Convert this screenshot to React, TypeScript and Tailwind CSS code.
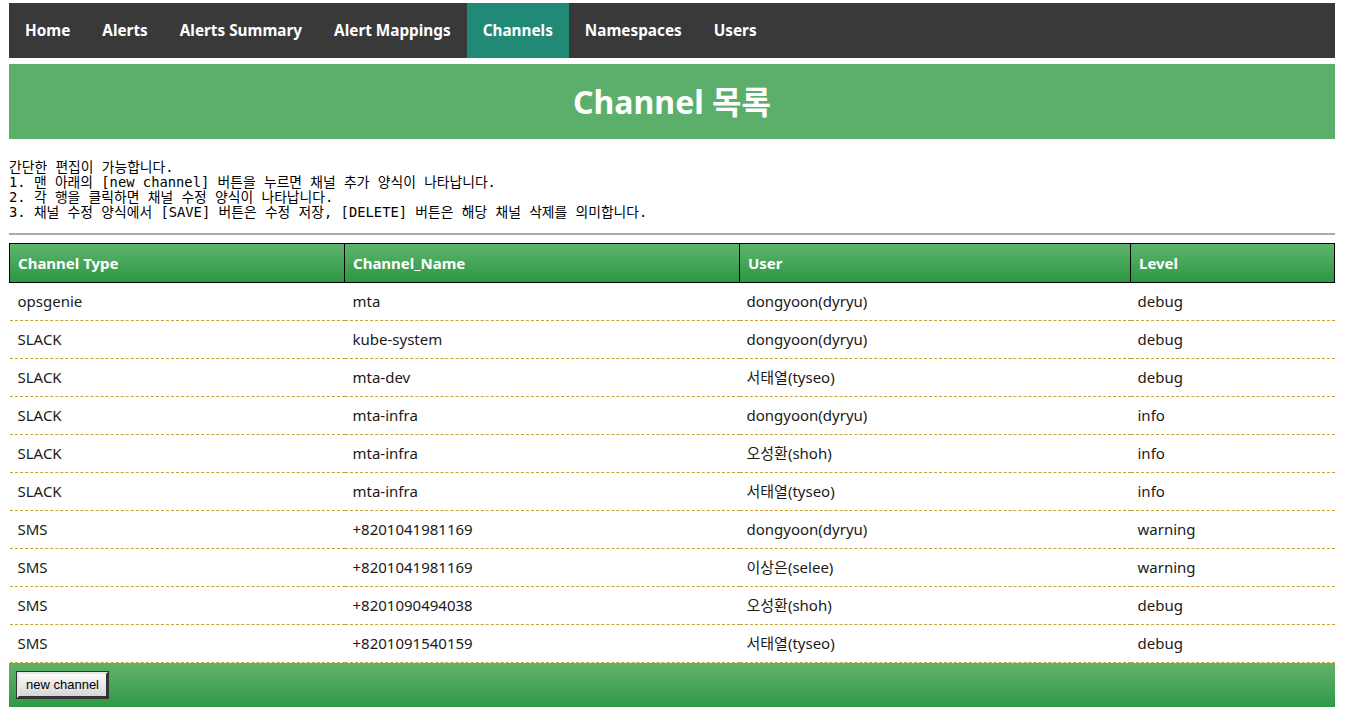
import React from 'react';

type Channel = {
  type: string;
  name: string;
  user: string;
  level: string;
};

const navItems = ['Home', 'Alerts', 'Alerts Summary', 'Alert Mappings', 'Channels', 'Namespaces', 'Users'];

const channels: Channel[] = [
  { type: 'opsgenie', name: 'mta', user: 'dongyoon(dyryu)', level: 'debug' },
  { type: 'SLACK', name: 'kube-system', user: 'dongyoon(dyryu)', level: 'debug' },
  { type: 'SLACK', name: 'mta-dev', user: '서태열(tyseo)', level: 'debug' },
  { type: 'SLACK', name: 'mta-infra', user: 'dongyoon(dyryu)', level: 'info' },
  { type: 'SLACK', name: 'mta-infra', user: '오성환(shoh)', level: 'info' },
  { type: 'SLACK', name: 'mta-infra', user: '서태열(tyseo)', level: 'info' },
  { type: 'SMS', name: '+8201041981169', user: 'dongyoon(dyryu)', level: 'warning' },
  { type: 'SMS', name: '+8201041981169', user: '이상은(selee)', level: 'warning' },
  { type: 'SMS', name: '+8201090494038', user: '오성환(shoh)', level: 'debug' },
  { type: 'SMS', name: '+8201091540159', user: '서태열(tyseo)', level: 'debug' },
];

const App = () => {
  return (
    <div className="min-h-[709px] bg-white pl-[9px] pr-[10px] pt-[3px] font-['Noto_Sans','Noto_Sans_CJK_KR',sans-serif]">
      {/* Top navigation */}
      <nav className="flex h-[55px] bg-[#393939]">
        {navItems.map((item) => (
          <a
            key={item}
            href="#"
            className={`flex items-center px-4 text-[15.3px] font-bold text-white ${
              item === 'Channels' ? 'bg-[#218a77]' : ''
            }`}
          >
            {item}
          </a>
        ))}
      </nav>

      {/* Title */}
      <div className="mt-[6px] flex h-[75px] items-center justify-center bg-[#5caf6b]">
        <h1 className="text-[32px] font-bold text-white">Channel 목록</h1>
      </div>

      {/* Help text */}
      <div className="mt-[21px] font-['DejaVu_Sans_Mono','Noto_Sans_CJK_KR',monospace] text-[13.8px] leading-[15px] text-black">
        <p>간단한 편집이 가능합니다.</p>
        <p>1. 맨 아래의 [new channel] 버튼을 누르면 채널 추가 양식이 나타납니다.</p>
        <p>2. 각 행을 클릭하면 채널 수정 양식이 나타납니다.</p>
        <p>3. 채널 수정 양식에서 [SAVE] 버튼은 수정 저장, [DELETE] 버튼은 해당 채널 삭제를 의미합니다.</p>
      </div>

      <hr className="mt-[13px] border-t-2 border-[#a9a9a9]" />

      {/* Channel table */}
      <table className="mt-[8px] w-full border-collapse text-[15px]">
        <colgroup>
          <col className="w-[335px]" />
          <col className="w-[395px]" />
          <col className="w-[391px]" />
          <col />
        </colgroup>
        <thead>
          <tr className="h-[39px] bg-gradient-to-b from-[#5db56d] to-[#289641] text-left text-white">
            <th className="border border-black px-2 font-bold">Channel Type</th>
            <th className="border border-black px-2 font-bold">Channel_Name</th>
            <th className="border border-black px-2 font-bold">User</th>
            <th className="border border-black px-2 font-bold">Level</th>
          </tr>
        </thead>
        <tbody>
          {channels.map((ch, i) => (
            <tr key={i} className="h-[38px] cursor-pointer border-b border-dashed border-[#c9a235] text-[#1a1a1a]">
              <td className="px-2">{ch.type}</td>
              <td className="px-2">{ch.name}</td>
              <td className="px-[7px]">{ch.user}</td>
              <td className="px-[7px]">{ch.level}</td>
            </tr>
          ))}
        </tbody>
      </table>

      {/* Footer */}
      <div className="flex h-[44px] items-center bg-gradient-to-b from-[#64b06b] to-[#2b9a45] px-2">
        <button
          type="button"
          className="h-[26px] border-2 border-t-[#e5e5e5] border-l-[#e5e5e5] border-r-[#333333] border-b-[#333333] bg-gradient-to-b from-[#fbfbfb] to-[#d6d6d6] px-[7px] font-['Liberation_Sans',Arial,sans-serif] text-[13px] text-black outline outline-1 outline-[#333333]"
        >
          new channel
        </button>
      </div>
    </div>
  );
};

export default App;
